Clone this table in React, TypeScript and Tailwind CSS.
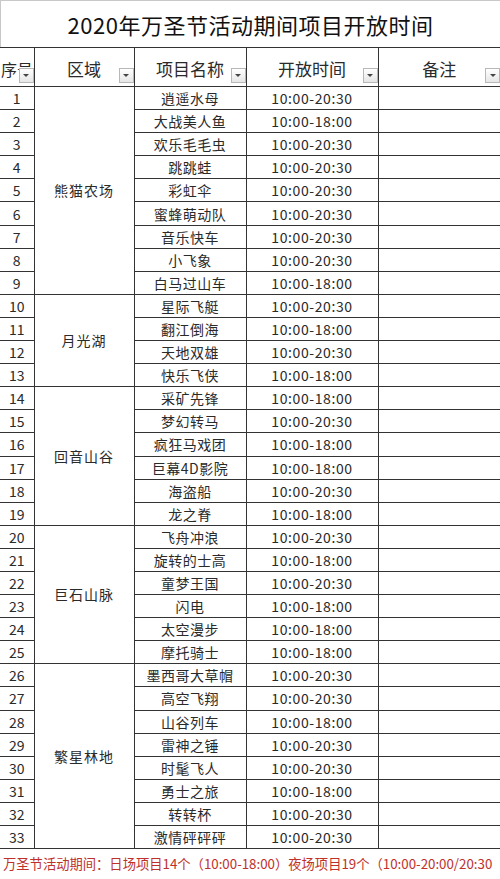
import React from "react";

type Item = [string, string];
const groups: { area: string; items: Item[] }[] = [
  {
    area: "熊猫农场",
    items: [
      ["逍遥水母", "10:00-20:30"],
      ["大战美人鱼", "10:00-18:00"],
      ["欢乐毛毛虫", "10:00-20:30"],
      ["跳跳蛙", "10:00-20:30"],
      ["彩虹伞", "10:00-20:30"],
      ["蜜蜂萌动队", "10:00-20:30"],
      ["音乐快车", "10:00-20:30"],
      ["小飞象", "10:00-20:30"],
      ["白马过山车", "10:00-18:00"],
    ],
  },
  {
    area: "月光湖",
    items: [
      ["星际飞艇", "10:00-20:30"],
      ["翻江倒海", "10:00-18:00"],
      ["天地双雄", "10:00-20:30"],
      ["快乐飞侠", "10:00-18:00"],
    ],
  },
  {
    area: "回音山谷",
    items: [
      ["采矿先锋", "10:00-18:00"],
      ["梦幻转马", "10:00-20:30"],
      ["疯狂马戏团", "10:00-18:00"],
      ["巨幕4D影院", "10:00-18:00"],
      ["海盗船", "10:00-20:30"],
      ["龙之脊", "10:00-18:00"],
    ],
  },
  {
    area: "巨石山脉",
    items: [
      ["飞舟冲浪", "10:00-20:30"],
      ["旋转的士高", "10:00-18:00"],
      ["童梦王国", "10:00-20:30"],
      ["闪电", "10:00-18:00"],
      ["太空漫步", "10:00-18:00"],
      ["摩托骑士", "10:00-18:00"],
    ],
  },
  {
    area: "繁星林地",
    items: [
      ["墨西哥大草帽", "10:00-20:30"],
      ["高空飞翔", "10:00-20:30"],
      ["山谷列车", "10:00-18:00"],
      ["雷神之锤", "10:00-20:30"],
      ["时髦飞人", "10:00-20:30"],
      ["勇士之旅", "10:00-18:00"],
      ["转转杯", "10:00-20:30"],
      ["激情砰砰砰", "10:00-20:30"],
    ],
  },
];

function FilterBtn() {
  return (
    <span className="absolute right-0 bottom-[3px] w-[15px] h-[15px] border border-[#b8b8b8] bg-gradient-to-b from-white to-[#e6e6e6] flex items-center justify-center">
      <span className="block w-0 h-0 border-l-[3px] border-r-[3px] border-t-[3px] border-l-transparent border-r-transparent border-t-[#444]" />
    </span>
  );
}

export default function App() {
  let n = 0;
  const font = { fontFamily: '"Noto Sans CJK SC", "Noto Sans", sans-serif' };
  return (
    <div
      className="w-[500px] h-[879px] bg-white text-[#2a2a2a] overflow-hidden"
      style={font}
    >
      <div className="h-[47px] flex items-center justify-center border-t border-l border-[#c8c8c8] text-[22px] font-normal tracking-[0.5px] text-[#111]">
        2020年万圣节活动期间项目开放时间
      </div>
      <table className="table-fixed w-[500px] border-collapse">
        <colgroup>
          <col className="w-[34px]" />
          <col className="w-[100px]" />
          <col className="w-[112px]" />
          <col className="w-[132px]" />
          <col className="w-[122px]" />
        </colgroup>
        <thead>
          <tr className="h-[39px]">
            <th className="relative border border-l-0 border-[#333] p-0 font-normal text-[16px] whitespace-nowrap overflow-hidden text-left pl-[1px] pt-[4px]">
              序号
              <FilterBtn />
            </th>
            <th className="relative border border-[#333] p-0 font-normal text-[17px] pt-[4px]">
              区域
              <FilterBtn />
            </th>
            <th className="relative border border-[#333] p-0 font-normal text-[17px] pt-[4px]">
              项目名称
              <FilterBtn />
            </th>
            <th className="relative border border-[#333] p-0 font-normal text-[17px] pt-[4px]">
              开放时间
              <FilterBtn />
            </th>
            <th className="relative border border-r-0 border-[#333] p-0 font-normal text-[17px] pt-[4px]">
              备注
              <FilterBtn />
            </th>
          </tr>
        </thead>
        <tbody>
          {groups.map((g) =>
            g.items.map((it, i) => {
              n += 1;
              return (
                <tr key={n} className="h-[23.1px]">
                  <td className="border border-l-0 border-[#333] p-0 text-center text-[14px] leading-[20px]">
                    {n}
                  </td>
                  {i === 0 && (
                    <td
                      rowSpan={g.items.length}
                      className="border border-[#333] p-0 text-center text-[14px] tracking-[1px]"
                    >
                      {g.area}
                    </td>
                  )}
                  <td className="border border-[#333] p-0 text-center text-[14px] leading-[20px] tracking-[0.5px]">
                    {it[0]}
                  </td>
                  <td className="border border-[#333] p-0 text-center text-[14px] leading-[20px] tracking-[0.6px]">
                    {it[1]}
                  </td>
                  <td className="border border-r-0 border-[#333] p-0" />
                </tr>
              );
            })
          )}
        </tbody>
      </table>
      <div className="h-[31px] flex items-center pl-[3px] border-b border-[#444] whitespace-nowrap overflow-hidden text-[13.3px] text-[#c0302b]">
        万圣节活动期间：日场项目14个（10:00-18:00）夜场项目19个（10:00-20:00/20:30
      </div>
    </div>
  );
}
